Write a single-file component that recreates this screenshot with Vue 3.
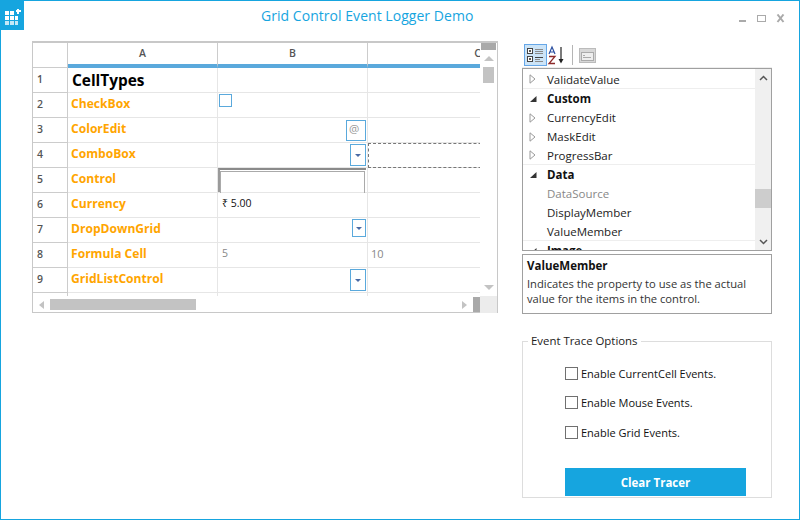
<script setup>
const cols = ['A', 'B', 'C']
const rows = [
  { n: 1, a: 'CellTypes', head: true },
  { n: 2, a: 'CheckBox', b: 'check' },
  { n: 3, a: 'ColorEdit', b: 'at' },
  { n: 4, a: 'ComboBox', b: 'drop', dropClass: 'd16', c: 'dash' },
  { n: 5, a: 'Control', b: 'control' },
  { n: 6, a: 'Currency', b: 'money' },
  { n: 7, a: 'DropDownGrid', b: 'drop', dropClass: 'd14' },
  { n: 8, a: 'Formula Cell', b: 'five', c: 'ten' },
  { n: 9, a: 'GridListControl', b: 'drop', dropClass: 'd16b' },
  { n: '', a: '' }
]
const props = [
  { t: 'ValidateValue', k: 'item', line: true },
  { t: 'Custom', k: 'cat' },
  { t: 'CurrencyEdit', k: 'item' },
  { t: 'MaskEdit', k: 'item' },
  { t: 'ProgressBar', k: 'item', line: true },
  { t: 'Data', k: 'cat' },
  { t: 'DataSource', k: 'none', dim: true },
  { t: 'DisplayMember', k: 'none' },
  { t: 'ValueMember', k: 'none', line: true },
  { t: 'Image', k: 'cat' }
]
const options = ['Enable CurrentCell Events.', 'Enable Mouse Events.', 'Enable Grid Events.']
</script>

<template>
  <div class="window">
    <header class="titlebar">
      <div class="logo">
        <svg width="24" height="30" viewBox="0 0 24 30">
          <rect width="24" height="30" fill="#16a5df" />
          <g fill="#fff">
            <rect x="5" y="11" width="4" height="4" /><rect x="10" y="11" width="4" height="4" />
            <rect x="5" y="16" width="4" height="4" /><rect x="10" y="16" width="4" height="4" /><rect x="15" y="16" width="3" height="4" />
            <rect x="5" y="21" width="4" height="4" opacity=".75" /><rect x="10" y="21" width="4" height="4" opacity=".75" /><rect x="15" y="21" width="3" height="4" opacity=".75" />
            <path d="M17 9h2v1h2v2h-2v2h-2v-2h-1v-2h1z" />
          </g>
        </svg>
      </div>
      <h1 class="title">Grid Control Event Logger Demo</h1>
      <div class="controls">
        <svg width="46" height="10" viewBox="0 0 46 10" fill="none" stroke="#aaa">
          <path d="M0 7h7" stroke-width="2" />
          <rect x="18.500" y="1.500" width="8" height="6" />
          <path d="M38.500 .5l6 7.500M44.500 .5l-6 7.500" stroke-width="2" />
        </svg>
      </div>
    </header>

    <main class="content">
      <section class="sheet">
        <div class="sheet-top">
          <div class="viewport">
            <div class="head-row">
              <div class="corner"></div>
              <div v-for="c in cols" :key="c" class="col-head">{{ c }}</div>
            </div>
            <div v-for="r in rows" :key="r.n" class="row">
              <div class="row-head">{{ r.n }}</div>
              <div class="cell a" :class="{ big: r.head }">{{ r.a }}</div>
              <div class="cell b">
                <span v-if="r.b === 'check'" class="mini-check"></span>
                <span v-else-if="r.b === 'at'" class="at-btn">@</span>
                <span v-else-if="r.b === 'drop'" class="drop-btn" :class="r.dropClass"><i></i></span>
                <span v-else-if="r.b === 'control'" class="control"><span></span></span>
                <span v-else-if="r.b === 'money'" class="money">₹ 5.00</span>
                <span v-else-if="r.b === 'five'" class="num">5</span>
              </div>
              <div class="cell c">
                <span v-if="r.c === 'dash'" class="dash"></span>
                <span v-else-if="r.c === 'ten'" class="num">10</span>
              </div>
            </div>
          </div>
          <div class="vscroll">
            <div class="v-block"></div>
            <i class="tri up"></i>
            <div class="v-thumb"></div>
            <i class="tri down"></i>
          </div>
        </div>
        <div class="hscroll">
          <i class="tri left"></i>
          <div class="h-thumb"></div>
          <i class="tri right"></i>
          <div class="h-block"></div>
          <div class="h-corner"></div>
        </div>
      </section>

      <aside class="side">
        <div class="toolbar">
          <span class="tool active">
            <svg width="20" height="18" viewBox="0 0 20 18" fill="none">
              <rect x="1.500" y="2.500" width="5" height="5" stroke="#444" fill="#fff" />
              <path d="M3 5h2M4 4v2" stroke="#222" />
              <rect x="1.500" y="10.500" width="5" height="5" stroke="#444" fill="#fff" />
              <path d="M3 13h2M4 12v2" stroke="#222" />
              <path d="M9 3.500h8M9 5.500h8M9 7.500h8" stroke="#8a8a8a" />
              <path d="M9 11.500h8" stroke="#444" /><path d="M9 13.500h5M9 15.500h8" stroke="#8a8a8a" />
            </svg>
          </span>
          <span class="tool az">
            <svg width="20" height="20" viewBox="0 0 20 20" fill="none">
              <path d="M2 9l3-7 3 7M3.200 7h3.600" stroke="#2a4fa0" stroke-width="1.200" />
              <path d="M2 11.500h6L2 18.500h6" stroke="#8c2a2a" stroke-width="1.300" />
              <path d="M14 2v15" stroke="#222" stroke-width="1.200" />
              <path d="M11.500 14h5L14 18.500z" fill="#222" />
            </svg>
          </span>
          <span class="sep"></span>
          <span class="tool pages">
            <svg width="17" height="15" viewBox="0 0 17 15" fill="none">
              <rect x=".5" y=".5" width="16" height="14" fill="#d8d8d8" stroke="#bbb" />
              <rect x="2.500" y="4.500" width="12" height="8" fill="#eee" stroke="#aaa" />
              <path d="M4 7.500h2M4 9.500h8" stroke="#aaa" />
            </svg>
          </span>
        </div>

        <div class="props">
          <div class="prop-list">
            <div v-for="p in props" :key="p.t" class="prop" :class="[p.k, { line: p.line, dim: p.dim }]">
              <span class="exp">
                <svg v-if="p.k === 'item'" width="7" height="10" viewBox="0 0 7 10"><path d="M1 .8L6 5 1 9.200z" fill="#fff" stroke="#999" /></svg>
                <svg v-else-if="p.k === 'cat'" width="8" height="8" viewBox="0 0 8 8"><path d="M7.500 1v6H1z" fill="#333" /></svg>
              </span>
              <span>{{ p.t }}</span>
            </div>
          </div>
          <div class="prop-scroll">
            <svg width="9" height="6" viewBox="0 0 9 6" fill="none" class="chev-up"><path d="M1 5l3.500-3.500L8 5" stroke="#555" stroke-width="1.500" /></svg>
            <div class="prop-thumb"></div>
            <svg width="9" height="6" viewBox="0 0 9 6" fill="none" class="chev-down"><path d="M1 1l3.500 3.500L8 1" stroke="#555" stroke-width="1.500" /></svg>
          </div>
        </div>

        <div class="desc">
          <strong>ValueMember</strong>
          <p>Indicates the property to use as the actual value for the items in the control.</p>
        </div>

        <fieldset class="trace">
          <legend>Event Trace Options</legend>
          <label v-for="(o, i) in options" :key="o" class="opt" :class="'opt' + i"><span class="box"></span>{{ o }}</label>
          <button class="clear" type="button">Clear Tracer</button>
        </fieldset>
      </aside>
    </main>
  </div>
</template>

<style>
html, body { margin: 0; background: #fff; }
</style>

<style scoped>
.window {
  width: 800px; height: 520px; box-sizing: border-box;
  border: 1px solid #16a5df; background: #fff;
  font-family: "Open Sans", "Noto Sans", sans-serif; font-size: 11.5px; color: #222;
  overflow: hidden;
}
.titlebar { height: 41px; display: flex; position: relative; }
.logo { margin: -1px 0 0 -1px; height: 30px; }
.logo svg { display: block; }
.title {
  margin: 5px 0 0 237px; font-size: 14px; font-weight: 400; color: #16a5df; line-height: 20px; white-space: nowrap;
  letter-spacing: .04px;
}
.controls { position: absolute; right: 14px; top: 13px; line-height: 0; }

.content { display: flex; align-items: flex-start; padding-left: 31px; }
.sheet { width: 466px; height: 272px; box-sizing: border-box; border: 1px solid #c8c8c8; border-top-width: 2px; display: flex; flex-direction: column; flex: none; margin-top: -1px; }
.sheet-top { display: flex; height: 253px; }
.viewport { width: 447px; height: 253px; overflow: hidden; flex: none; }
.head-row, .row { display: grid; grid-template-columns: 35px 150px 150px 220px; grid-template-rows: 25px; width: 555px; height: 25px; }
.corner { border-right: 1px solid #ccc; border-bottom: 1px solid #ccc; box-sizing: border-box; }
.col-head {
  box-sizing: border-box; border-right: 1px solid #ccc; border-bottom: 4px solid #5aa9dc; text-align: center;
  font-weight: 600; font-size: 10.500px; color: #555; line-height: 20px;
}
.row-head {
  box-sizing: border-box; border-right: 1px solid #ccc; border-bottom: 1px solid #ccc; padding-left: 4px;
  font-weight: 600; font-size: 10.500px; color: #555; line-height: 23px;
}
.cell { box-sizing: border-box; border-right: 1px solid #e6e6e6; border-bottom: 1px solid #e6e6e6; position: relative; display: flex; min-width: 0; }
.cell.a { font-weight: 700; font-size: 12.100px; color: #ffa500; padding: 0 0 0 3px; line-height: 22px; white-space: nowrap; }
.cell.a.big { color: #000; font-size: 15.400px; line-height: 26px; padding-left: 4px; }
.mini-check { width: 11px; height: 11px; border: 1px solid #5aa9dc; margin: 1px 0 0 1px; }
.at-btn {
  position: absolute; right: 1px; top: 2px; width: 16px; height: 19px; padding-left: 2px; border: 1px solid #5aa9dc;
  color: #999; font-size: 11.500px; line-height: 15px; text-align: left;
}
.drop-btn { position: absolute; right: 1px; top: 1px; width: 14px; height: 20px; border: 1px solid #5aa9dc; display: flex; align-items: center; justify-content: center; }
.drop-btn.d14 { width: 12px; height: 16px; }
.drop-btn i { width: 0; height: 0; border: 3px solid transparent; border-top: 3px solid #4a6aa5; border-bottom: 0; }
.control { position: absolute; inset: 0 1px 0 0; border-top: 2px solid #8a8a8a; border-left: 2px solid #9a9a9a; }
.control span { display: block; height: 100%; box-sizing: border-box; margin-right: 1px; border: 1px solid #aaa; border-bottom: 0; margin-top: 1px; }
.money { font-size: 10.500px; color: #111; margin: 3px 0 0 4px; }
.num { font-size: 10.500px; color: #888; margin: 3px 0 0 4px; }
.cell.c .num { margin-left: 3px; font-size: 11px; }
.dash { position: absolute; left: 0; top: 0; right: 0; bottom: -1px; border: 1px dashed #777; border-right: 0; }

.vscroll { width: 17px; flex: none; position: relative; display: flex; flex-direction: column; align-items: center; }
.v-block { width: 15px; height: 7px; background: #a9a9a9; }
.tri { width: 0; height: 0; display: block; border: 5px solid transparent; }
.tri.up { border-bottom: 5px solid #c3c3c3; border-top: 0; margin-top: 6px; }
.tri.down { border-top: 5px solid #c3c3c3; border-bottom: 0; margin-top: 202px; }
.v-thumb { width: 11px; height: 16px; background: #c3c3c3; margin-top: 6px; }
.hscroll { height: 17px; display: flex; align-items: center; position: relative; }
.tri.left { border-right: 5px solid #c3c3c3; border-left: 0; border-top-width: 4.500px; border-bottom-width: 4.500px; margin-left: 6px; }
.h-thumb { width: 146px; height: 11px; background: #c3c3c3; margin-left: 6px; }
.tri.right { border-left: 5px solid #c3c3c3; border-right: 0; border-top-width: 4.500px; border-bottom-width: 4.500px; margin-left: 266px; }
.h-block { width: 7px; height: 15px; background: #a9a9a9; margin-left: 6px; }
.h-corner { width: 17px; height: 17px; background: #ececec; }

.side { width: 250px; margin-left: 24px; flex: none; }
.toolbar { display: flex; align-items: center; height: 25px; border-bottom: 1px solid #eee; margin-top: 1px; padding-left: 2px; box-sizing: border-box; }
.tool { display: flex; align-items: center; justify-content: center; }
.tool.active { width: 21px; height: 20px; background: #cce4f7; border: 1px solid #66a7e8; }
.tool.az { width: 21px; height: 22px; margin-left: -1px; }
.sep { width: 1px; height: 20px; background: #b5b5b5; margin: 0 6px 0 5px; }
.props { height: 183px; box-sizing: border-box; border: 1px solid #a0a0a0; display: flex; overflow: hidden; }
.prop-list { flex: 1; min-width: 0; overflow: hidden; padding-top: 1px; }
.prop { height: 19px; box-sizing: border-box; display: flex; align-items: center; font-size: 11.500px; color: #222; white-space: nowrap; }
.prop.line { border-bottom: 1px solid #eee; }
.prop.cat { font-weight: 700; color: #111; }
.prop.dim { color: #888; }
.exp { width: 24px; flex: none; display: flex; padding-left: 6px; box-sizing: border-box; }
.prop-scroll { width: 16px; flex: none; background: #f0f0f0; display: flex; flex-direction: column; align-items: center; position: relative; }
.chev-up { margin-top: 6px; }
.prop-thumb { width: 16px; height: 19px; background: #cdcdcd; margin-top: 108px; }
.chev-down { margin-top: 31px; }
.desc { height: 60px; box-sizing: border-box; margin-top: 3px; border: 1px solid #a0a0a0; padding: 3px 4px; font-size: 11.200px; color: #333; line-height: 15px; }
.desc strong { display: block; font-size: 11.500px; color: #111; font-weight: 700; margin-bottom: 3px; }
.desc p { margin: 0; }

.trace { margin: 20px 0 0; padding: 0; width: 250px; height: 164px; box-sizing: border-box; border: 1px solid #ddd; min-inline-size: 0; display: flex; flex-direction: column; align-items: flex-start; }
.trace legend { margin-left: 5px; padding: 0 3px; font-size: 11.400px; line-height: 14px; color: #222; }
.opt { display: flex; align-items: center; margin: 17px 0 0 42px; height: 13px; font-size: 11px; color: #111; }
.opt0 { margin-top: 19px; }
.opt1 { margin-top: 16px; }
.box { width: 11px; height: 11px; border: 1px solid #707070; margin-right: 3px; flex: none; }
.clear { margin: 29px 0 0 42px; width: 181px; height: 28px; border: 0; padding: 0; background: #16a5df; color: #fff; font: 700 11.500px "Open Sans", "Noto Sans", sans-serif; }
</style>
